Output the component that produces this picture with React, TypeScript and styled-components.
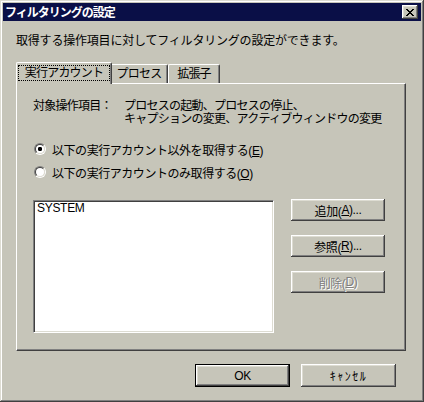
import * as React from 'react';
import styled, { createGlobalStyle } from 'styled-components';

const face = '#c6c5b9';
const light = '#dddcd2';
const shadow = '#808080';
const dark = '#404040';

const GlobalStyle = createGlobalStyle`
  html, body {
    margin: 0;
    padding: 0;
    background: ${face};
  }
  body {
    font-family: "Liberation Sans", "Noto Sans CJK JP", sans-serif;
    font-size: 12px;
    color: #000;
  }
  * {
    box-sizing: border-box;
  }
`;

const Window = styled.div`
  width: 424px;
  height: 402px;
  padding: 3px;
  display: flex;
  flex-direction: column;
  background: ${face};
  box-shadow: inset -1px -1px ${dark}, inset 1px 1px ${light},
    inset -2px -2px ${shadow}, inset 2px 2px #fff;
`;

const TitleBar = styled.div`
  height: 18px;
  display: flex;
  align-items: center;
  justify-content: space-between;
  padding: 0 3px 0 2px;
  background: #0a0f47;
`;

const Title = styled.span`
  color: #fff;
  font-weight: bold;
  font-size: 12px;
  letter-spacing: -1px;
  line-height: 18px;
  font-family: "Noto Sans CJK JP", sans-serif;
`;

const CloseButton = styled.div`
  width: 16px;
  height: 14px;
  display: flex;
  align-items: center;
  justify-content: center;
  background: ${face};
  box-shadow: inset -1px -1px ${dark}, inset 1px 1px #fff,
    inset -2px -2px ${shadow}, inset 2px 2px ${light};
`;

const Body = styled.div`
  flex: 1;
  display: flex;
  flex-direction: column;
  padding: 13px 15px 0 13px;
`;

const Description = styled.div`
  line-height: 14px;
  letter-spacing: -0.2px;
`;

const TabStrip = styled.div`
  display: flex;
  align-items: flex-end;
  height: 21px;
  margin-top: 14px;
  padding-left: 2px;
  position: relative;
  z-index: 1;
`;

const Tab = styled.div<{ active?: boolean; width: number }>`
  width: ${({ width, active }) => (active ? width + 4 : width)}px;
  height: ${({ active }) => (active ? 22 : 19)}px;
  margin: ${({ active }) => (active ? '0 -2px -1px -2px' : '0')};
  position: relative;
  z-index: ${({ active }) => (active ? 2 : 1)};
  background: ${face};
  border-left: 1px solid #fff;
  border-top: 1px solid #fff;
  border-right: 1px solid ${dark};
  border-radius: 2px 2px 0 0;
  box-shadow: inset -1px 0 ${shadow};
  display: flex;
  justify-content: center;
  align-items: ${({ active }) => (active ? 'flex-start' : 'center')};
  letter-spacing: -0.8px;
  line-height: 14px;
`;

const TabFocus = styled.div`
  margin: 2px 1px 0 1px;
  align-self: stretch;
  height: 16px;
  flex: 1;
  border: 1px dotted #000;
  text-align: center;
  line-height: 14px;
`;

const Panel = styled.div`
  height: 268px;
  border-top: 1px solid #fff;
  border-left: 1px solid #fff;
  border-right: 1px solid ${dark};
  border-bottom: 1px solid ${dark};
  box-shadow: inset -1px -1px ${shadow};
  padding: 16px 16px 0 16px;
  display: flex;
  flex-direction: column;
`;

const OpsRow = styled.div`
  display: grid;
  grid-template-columns: 91px 1fr;
  line-height: 13px;
  letter-spacing: -0.75px;
`;

const RadioGroup = styled.div`
  display: flex;
  flex-direction: column;
  gap: 7px;
  margin-top: 15px;
`;

const RadioRow = styled.div`
  display: flex;
  align-items: center;
  height: 16px;
  gap: 6px;
  padding-left: 1px;
  letter-spacing: -0.45px;
`;

const RadioCircle = styled.span<{ checked?: boolean }>`
  width: 12px;
  height: 12px;
  border-radius: 50%;
  border: 1px solid;
  border-color: ${shadow} #fff #fff ${shadow};
  display: flex;
  flex: none;

  &::before {
    content: '';
    flex: 1;
    border-radius: 50%;
    border: 1px solid;
    border-color: ${dark} ${light} ${light} ${dark};
    background: ${({ checked }) =>
      checked
        ? 'radial-gradient(circle at 50% 50%, #000 0 2px, #fff 2.3px)'
        : '#fff'};
  }
`;

const Lower = styled.div`
  display: flex;
  margin-top: 20px;
`;

const ListBox = styled.div`
  width: 241px;
  height: 133px;
  background: #fff;
  border: 1px solid;
  border-color: ${shadow} #fff #fff ${shadow};
  box-shadow: inset 1px 1px ${dark}, inset -1px -1px ${light};
  padding: 1px 3px;
`;

const ListItem = styled.div`
  line-height: 13px;
  letter-spacing: -0.3px;
`;

const SideButtons = styled.div`
  display: flex;
  flex-direction: column;
  gap: 14px;
  margin-left: 17px;
  margin-top: -1px;
`;

const PushButton = styled.button<{ width: number; height: number; isDefault?: boolean }>`
  width: ${({ width }) => width}px;
  height: ${({ height }) => height}px;
  padding: 0;
  margin: 0;
  font: inherit;
  letter-spacing: -0.4px;
  color: #000;
  background: ${face};
  border: ${({ isDefault }) => (isDefault ? '1px solid #000' : 'none')};
  box-shadow: inset -1px -1px ${dark}, inset 1px 1px #fff,
    inset -2px -2px ${shadow}, inset 2px 2px ${light};
  display: flex;
  align-items: center;
  justify-content: center;

  &:disabled {
    color: ${shadow};
    text-shadow: 1px 1px 0 #fff;
  }
`;

const Kana = styled.span`
  letter-spacing: 1.5px;
`;

const Footer = styled.div`
  display: flex;
  justify-content: flex-end;
  gap: 11px;
  margin-top: 13px;
  padding-right: 10px;
`;

const closeRows = [
  '11000011',
  '01100110',
  '00111100',
  '00011000',
  '00111100',
  '01100110',
  '11000011',
];

const closePath = closeRows
  .map((row, y) => {
    let d = '';
    let x = 0;
    while (x < row.length) {
      if (row[x] === '1') {
        let len = 0;
        while (row[x + len] === '1') len++;
        d += `M${x} ${y}h${len}v1h-${len}z`;
        x += len;
      } else {
        x++;
      }
    }
    return d;
  })
  .join('');

const CloseGlyph = () => (
  <svg width="8" height="7" viewBox="0 0 8 7" shapeRendering="crispEdges">
    <path d={closePath} fill="#000" />
  </svg>
);

export default function App() {
  return (
    <>
      <GlobalStyle />
      <Window>
        <TitleBar>
          <Title>フィルタリングの設定</Title>
          <CloseButton>
            <CloseGlyph />
          </CloseButton>
        </TitleBar>
        <Body>
          <Description>取得する操作項目に対してフィルタリングの設定ができます。</Description>
          <TabStrip>
            <Tab active width={92}>
              <TabFocus>実行アカウント</TabFocus>
            </Tab>
            <Tab width={58}>プロセス</Tab>
            <Tab width={52}>拡張子</Tab>
          </TabStrip>
          <Panel>
            <OpsRow>
              <span>対象操作項目：</span>
              <span>
                プロセスの起動、プロセスの停止、
                <br />
                キャプションの変更、アクティブウィンドウの変更
              </span>
            </OpsRow>
            <RadioGroup>
              <RadioRow>
                <RadioCircle checked />
                <span>
                  以下の実行アカウント以外を取得する(<u>E</u>)
                </span>
              </RadioRow>
              <RadioRow>
                <RadioCircle />
                <span>
                  以下の実行アカウントのみ取得する(<u>O</u>)
                </span>
              </RadioRow>
            </RadioGroup>
            <Lower>
              <ListBox>
                <ListItem>SYSTEM</ListItem>
              </ListBox>
              <SideButtons>
                <PushButton width={94} height={22}>
                  追加(<u>A</u>)...
                </PushButton>
                <PushButton width={94} height={22}>
                  参照(<u>R</u>)...
                </PushButton>
                <PushButton width={94} height={22} disabled>
                  削除(<u>D</u>)
                </PushButton>
              </SideButtons>
            </Lower>
          </Panel>
          <Footer>
            <PushButton width={95} height={23} isDefault>
              OK
            </PushButton>
            <PushButton width={95} height={23}>
              <Kana>ｷｬﾝｾﾙ</Kana>
            </PushButton>
          </Footer>
        </Body>
      </Window>
    </>
  );
}
